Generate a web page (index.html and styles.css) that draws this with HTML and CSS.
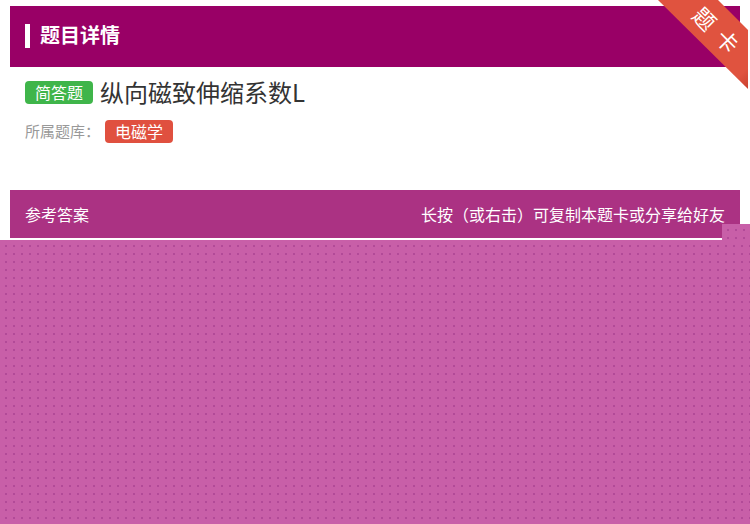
FILE: index.html
```html
<!DOCTYPE html>
<html lang="zh">
<head>
<meta charset="utf-8">
<link rel="stylesheet" href="styles.css">
</head>
<body>
<div class="page">
  <div class="card-head">
    <span class="head-bar"></span>
    <span class="head-title">题目详情</span>
  </div>
  <div class="question">
    <div class="q-row">
      <span class="badge badge-green">简答题</span>
      <span class="q-title">纵向磁致伸缩系数L</span>
    </div>
    <div class="bank-row">
      <span class="bank-label">所属题库：</span>
      <span class="badge badge-red">电磁学</span>
    </div>
  </div>
  <div class="answer-bar">
    <span>参考答案</span>
    <span>长按（或右击）可复制本题卡或分享给好友</span>
  </div>
  <div class="answer-line"></div>
</div>
<div class="ribbon"><div class="ribbon-text"><span>题</span><span>卡</span></div></div>
<div class="overlay"></div>
<div class="overlay-tab"></div>
</body>
</html>
```

FILE: styles.css
```css
html, body {
  margin: 0;
  padding: 0;
  background: #ffffff;
  font-family: "Noto Sans CJK SC", "Noto Sans", sans-serif;
  width: 750px;
  height: 524px;
  overflow: hidden;
  position: relative;
}
.page {
  padding: 6px 10px 0 10px;
}
.card-head {
  height: 61px;
  background: #990066;
  display: flex;
  align-items: center;
  padding-left: 15px;
  padding-bottom: 3px;
  box-sizing: border-box;
}
.head-bar {
  width: 5px;
  height: 24px;
  background: #ffffff;
  margin-right: 10px;
  margin-top: 2px;
}
.head-title {
  color: #ffffff;
  font-size: 20px;
  font-weight: bold;
  line-height: 24px;
}
.question {
  padding: 11px 15px 0 15px;
  height: 112px;
}
.q-row {
  display: flex;
  align-items: center;
  height: 28px;
}
.badge {
  display: inline-block;
  color: #ffffff;
  font-size: 16px;
  line-height: 22px;
  height: 23px;
  padding: 0 10px;
  border-radius: 4px;
}
.badge-green {
  background: #3fb54a;
  margin-right: 7px;
}
.badge-red {
  background: #e0503f;
}
.q-title {
  font-size: 24px;
  color: #333333;
  line-height: 28px;
}
.bank-row {
  display: flex;
  align-items: center;
  margin-top: 13px;
  height: 24px;
}
.bank-label {
  font-size: 15px;
  color: #999999;
  width: 80px;
  line-height: 24px;
}
.answer-bar {
  height: 48px;
  background: #ab3283;
  color: #ffffff;
  font-size: 16px;
  display: flex;
  justify-content: space-between;
  align-items: center;
  padding: 0 15px;
}
.answer-line {
  height: 2px;
  background: #ffffff;
}
.ribbon {
  position: absolute;
  left: 655px;
  top: 0;
  width: 93px;
  height: 89px;
  background: linear-gradient(135deg, #e0533f 88%, #c9412f 100%);
  clip-path: polygon(3px 0, 63px 0, 93px 30px, 93px 89px);
}
.ribbon-text {
  position: absolute;
  left: 32px;
  top: 17px;
  width: 60px;
  height: 24px;
  display: flex;
  justify-content: center;
  gap: 10px;
  color: #ffffff;
  font-size: 22px;
  line-height: 24px;
  transform: rotate(45deg);
}
.overlay {
  position: absolute;
  left: 0;
  right: 0;
  top: 240px;
  bottom: 0;
  background-color: #c85fa8;
  background-image: radial-gradient(circle, #b24a98 0.8px, transparent 1.2px);
  background-size: 8px 8px;
  background-position: 2px 2px;
}
.overlay-tab {
  position: absolute;
  left: 722px;
  right: 0;
  top: 224px;
  height: 16px;
  background-color: #c85fa8;
  background-image: radial-gradient(circle, #b24a98 0.8px, transparent 1.2px);
  background-size: 8px 8px;
  background-position: 2px 2px;
}
```
